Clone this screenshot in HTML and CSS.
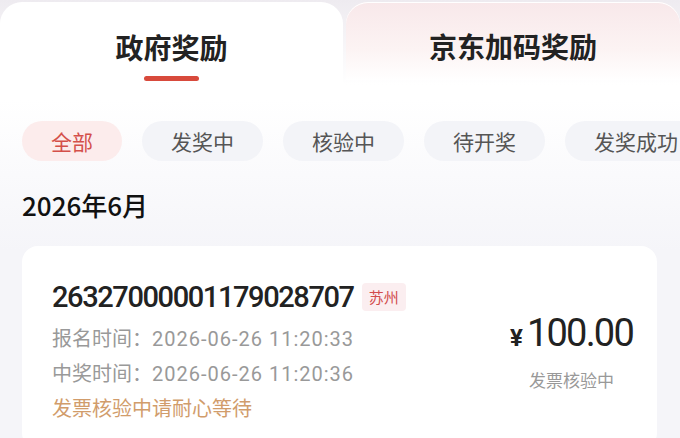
FILE: index.html
```html
<!DOCTYPE html>
<html lang="zh-CN">
<head>
  <meta charset="UTF-8" />
  <meta name="viewport" content="width=device-width, initial-scale=1.0"/>
  <title>奖励记录</title>
  <link rel="stylesheet" href="styles.css">
</head>
<body>
  <!-- Tabs -->
  <header class="tabs">
    <div class="tab active">
      <span>政府奖励</span>
      <i class="bar"></i>
    </div>
    <div class="tab other">
      <span>京东加码奖励</span>
    </div>
  </header>

  <main class="content">
    <!-- Filter chips -->
    <div class="chips">
      <span class="chip on">全部</span>
      <span class="chip">发奖中</span>
      <span class="chip">核验中</span>
      <span class="chip">待开奖</span>
      <span class="chip">发奖成功</span>
    </div>

    <h2 class="month">2026年6月</h2>

    <!-- Record card -->
    <section class="card">
      <div class="info">
        <div class="code">
          <span class="num">26327000001179028707</span>
          <span class="tag">苏州</span>
        </div>
        <p class="line">报名时间：<span class="time">2026-06-26 11:20:33</span></p>
        <p class="line">中奖时间：<span class="time">2026-06-26 11:20:36</span></p>
        <p class="line tip">发票核验中请耐心等待</p>
      </div>
      <div class="side">
        <div class="amount"><small>¥</small>100.00</div>
        <div class="state">发票核验中</div>
      </div>
    </section>
  </main>
</body>
</html>
```

FILE: styles.css
```css
body { margin: 0; font-family: "Noto Sans CJK SC", "Noto Sans", sans-serif; color: #222; background: #f5f5f8; }

/* Tabs */
.tabs { display: flex; height: 100px; background: linear-gradient(#eeebf0, #fff 85px); padding-top: 2px; box-sizing: border-box; }
.tab { display: flex; flex-direction: column; align-items: center; font-size: 28px; font-weight: 700; color: #222; }
.tab.active { flex: 0 0 343px; background: #fff; border-radius: 22px 22px 0 0; padding-top: 25px; box-sizing: border-box; }
.tab.other { flex: 1; margin-left: 3px; height: 78px; padding-top: 24px; box-sizing: border-box; border-radius: 22px 22px 0 0;
  background: linear-gradient(#f8e8ea, #fcf3f3 60%, #fff); box-shadow: inset 0 1px 0 #fff; }
.tab span { line-height: 40px; }
.bar { display: block; width: 55px; height: 5px; margin-top: 9px; border-radius: 3px; background: #d84a3c; }

/* Content */
.content { background: linear-gradient(#fff, #f5f5f9 150px); padding: 21px 23px 0 22px; }
.chips { display: flex; gap: 20px; white-space: nowrap; overflow: hidden; margin-right: -23px; }
.chip { flex-shrink: 0; height: 40px; line-height: 40px; padding: 0 29px; border-radius: 20px; font-size: 21px; color: #555; background: #f3f4f8; }
.chip.on { background: #fcecec; color: #d4504a; }

.month { margin: 27px 0 24px; font-size: 26px; line-height: 34px; font-weight: 500; color: #111; }

/* Card */
.card { display: flex; align-items: center; justify-content: space-between; background: #fff; border-radius: 16px; padding: 31px 24px 24px 30px; }
.code { display: flex; align-items: center; height: 40px; }
.num { font-family: "Roboto", sans-serif; font-weight: 500; font-size: 29px; letter-spacing: -1.4px; color: #222; }
.tag { margin-left: 8px; height: 28px; line-height: 28px; padding: 0 7px; border-radius: 4px; font-size: 15px; color: #d24c4c; background: #fbeef0; }
.line { margin: 0; font-size: 20px; line-height: 34px; color: #999; }
.time { font-family: "Roboto", sans-serif; letter-spacing: 1px; }
.code + .line { margin-top: 4px; }
.tip { color: #d19c6b; }

.side { text-align: center; }
.amount { font-family: "Roboto", sans-serif; font-size: 38px; letter-spacing: -1.8px; line-height: 46px; color: #222; }
.amount small { font-size: 24px; font-weight: 700; margin-right: 4px; letter-spacing: 0; }
.state { font-size: 17px; line-height: 26px; color: #999; margin-top: 6px; }
```
